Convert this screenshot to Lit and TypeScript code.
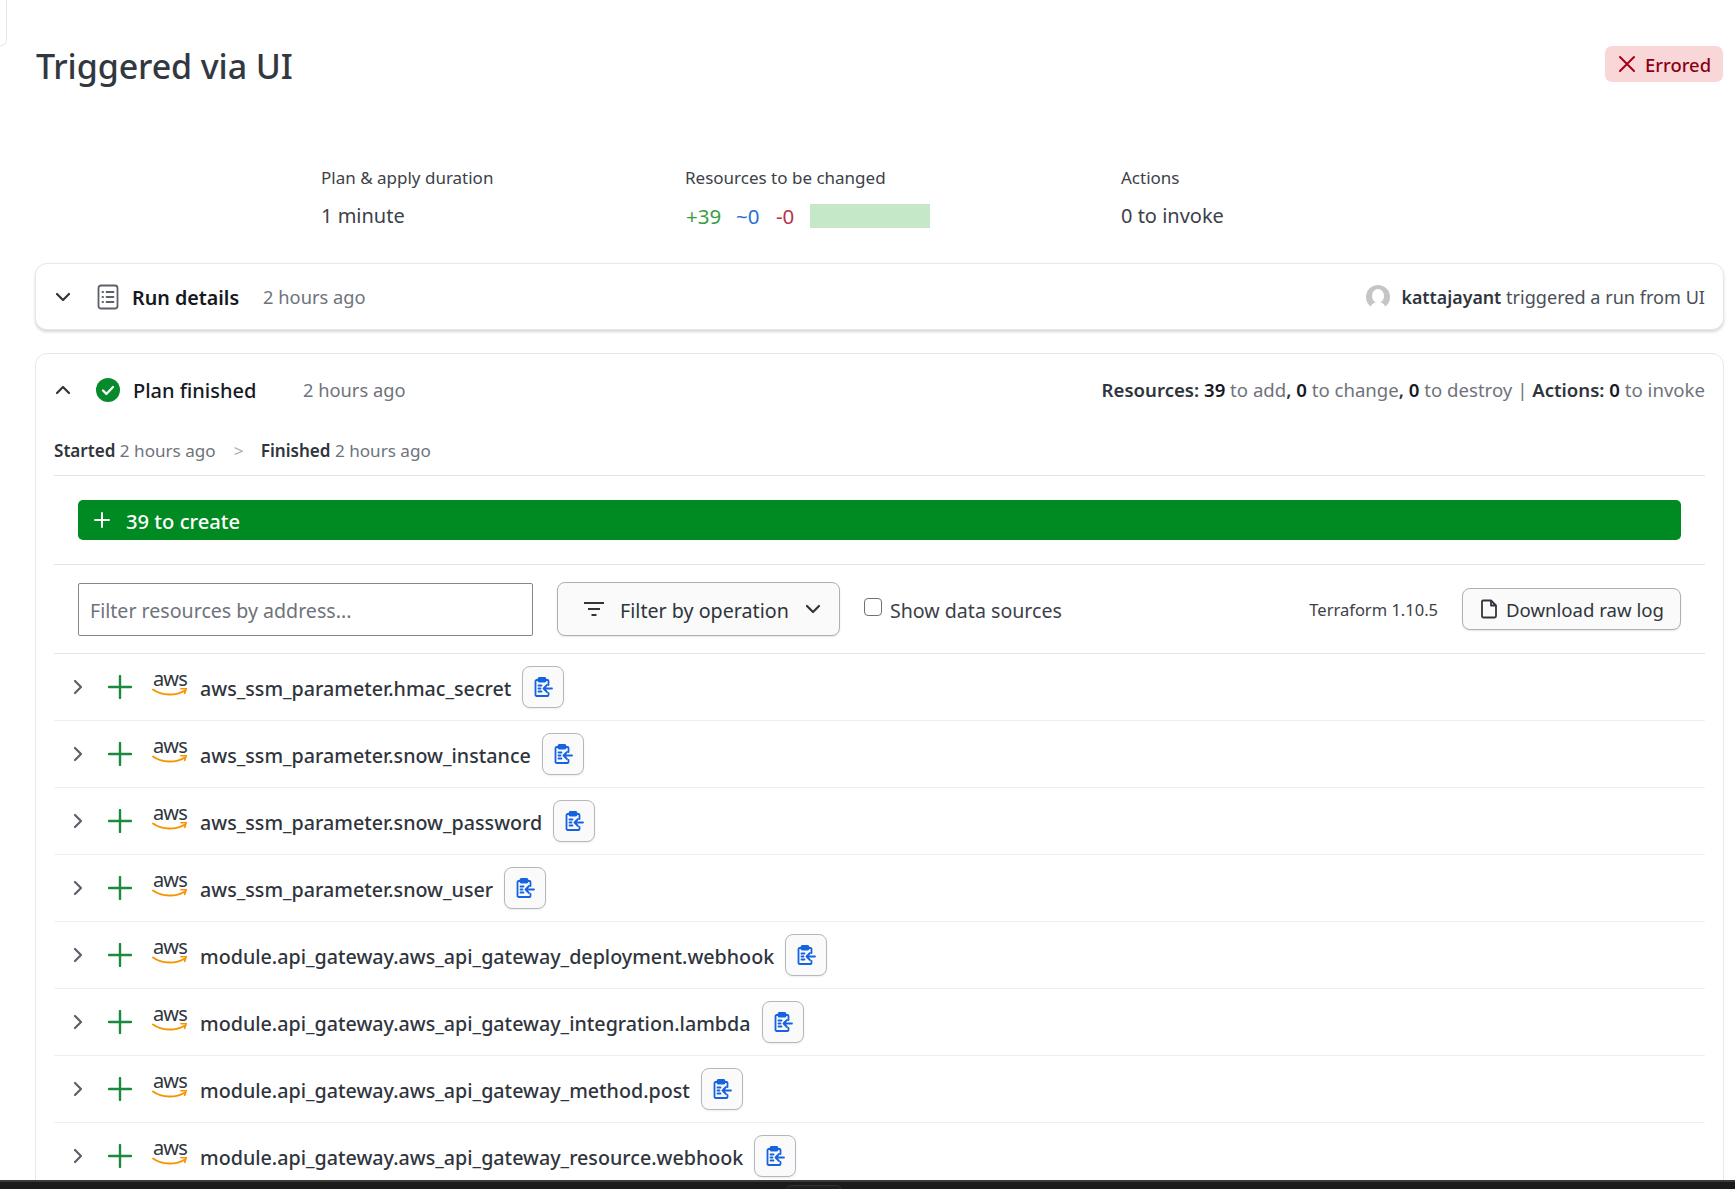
import { LitElement, html, css, svg } from "lit";
import { customElement } from "lit/decorators.js";

const chevron = (d: string, cls = "") => html`<svg class="chev ${cls}" viewBox="0 0 18 18" fill="none" stroke="currentColor" stroke-width="2.2" stroke-linecap="round" stroke-linejoin="round"><path d=${d}/></svg>`;

const clipIcon = svg`<svg class="clip" viewBox="0 0 20 20" fill="none" stroke="#1563e0" stroke-width="1.8" stroke-linejoin="round" stroke-linecap="round"><path d="M5.5 3H3.6A1.1 1.1 0 0 0 2.5 4.1v13.8A1.1 1.1 0 0 0 3.6 19h10.8a1.1 1.1 0 0 0 1.1-1.1V16"/><path d="M12.5 3h1.9a1.1 1.1 0 0 1 1.1 1.1V8"/><rect x="5.5" y="1" width="7" height="3.6" rx=".8" fill="#1563e0"/><path d="M5.5 8.5h3M5.5 11.5h2M5.5 14.5h3"/><path d="M19 11.5h-8M14 8l-3.500 3.500L14 15"/></svg>`;

const awsIcon = html`<div class="aws"><span>aws</span><svg viewBox="0 0 36 10" fill="none"><path d="M1 1.500c9 6.500 23 6.500 31.500 1.200" stroke="#f79400" stroke-width="1.900" stroke-linecap="round"/><path d="M29 .7l5.300-.4-1.600 5" stroke="#f79400" stroke-width="1.700" stroke-linecap="round" stroke-linejoin="round"/></svg></div>`;

const ROWS = [
  "aws_ssm_parameter.hmac_secret",
  "aws_ssm_parameter.snow_instance",
  "aws_ssm_parameter.snow_password",
  "aws_ssm_parameter.snow_user",
  "module.api_gateway.aws_api_gateway_deployment.webhook",
  "module.api_gateway.aws_api_gateway_integration.lambda",
  "module.api_gateway.aws_api_gateway_method.post",
  "module.api_gateway.aws_api_gateway_resource.webhook",
];

@customElement("app-root")
export class AppRoot extends LitElement {
  static styles = css`
    :host { display: flex; flex-direction: column; position: relative; height: 1189px; overflow: hidden; background: #fff; color: #30353d; font-family: "Noto Sans", sans-serif; }
    * { box-sizing: border-box; }
    .corner { position: absolute; left: -8px; top: -8px; width: 15px; height: 54px; border: 1px solid #e6e6e6; border-radius: 6px; }
    main { flex: 1; min-height: 0; overflow: hidden; padding: 46px 11px 0 35px; }
    .head { display: flex; justify-content: space-between; align-items: flex-start; height: 40px; }
    h1 { margin: 0 0 0 1px; font-size: 34px; line-height: 40px; font-weight: 500; color: #323840; letter-spacing: -.1px; }
    .badge { display: flex; align-items: center; gap: 9px; height: 36px; width: 118px; margin-right: 1px; padding-left: 13px; border-radius: 7px; background: #f9d7d9; color: #8a0013; font-size: 18.400px; font-weight: 500; }
    .badge svg { width: 18px; height: 18px; }
    .badge span { margin-top: 1px; }
    .stats { display: grid; grid-template-columns: 364px 436px auto; padding: 80px 0 0 286px; margin-bottom: 32px; }
    .label { font-size: 17px; line-height: 24px; color: #3c4149; }
    .value { margin-top: 11px; font-size: 20px; line-height: 30px; color: #3c4149; }
    .counts { display: flex; align-items: center; height: 30px; margin-top: 11px; font-size: 20.500px; }
    .g { color: #3a9b45; width: 51px; padding-left: 1px; }
    .b { color: #2a6fd6; width: 40px; }
    .r { color: #b7344a; width: 34px; }
    .bar { width: 120px; height: 24px; background: #c5e9c8; }
    .card { border: 1.5px solid #e8e8e8; border-radius: 12px; background: #fff; }
    .run { display: flex; align-items: center; height: 67px; margin-bottom: 23px; padding: 0 18px 0 18px; box-shadow: 0 2px 3px rgba(0,0,0,.16); }
    .chev { width: 18px; height: 18px; color: #30353d; flex: none; }
    .doc { width: 22px; height: 26px; margin-left: 25px; flex: none; }
    .t { font-size: 19.700px; font-weight: 600; color: #15191e; margin-top: 1px; }
    .run .t { margin-left: 13px; }
    .ago { font-size: 18.300px; color: #6e737b; }
    .run .ago { margin-left: 24px; }
    .end { margin-left: auto; display: flex; align-items: center; font-size: 18.100px; color: #4a4f57; }
    .avatar { width: 24px; height: 24px; margin-right: 12px; }
    .end b { font-weight: 600; color: #30353d; font-size: 17.800px; }
    .plan { height: 1000px; padding: 0 18px; }
    .phead { display: flex; align-items: center; height: 71px; }
    .check { width: 24px; height: 24px; margin-left: 24px; flex: none; }
    .phead .t { margin-left: 13px; width: 170px; font-size: 20px; font-weight: 500; }
    .sum { font-size: 18.600px; color: #6e737b; margin-left: auto; }
    .sum b { font-weight: 600; color: #30353d; }
    .sum b.n { color: #15191e; }
    .times { display: flex; align-items: center; height: 51px; border-bottom: 1.5px solid #e4e4e4; font-size: 17.100px; color: #6e737b; }
    .times b { font-weight: 600; color: #30353d; }
    .sep { width: 45px; padding-left: 18px; color: #a9adb3; }
    .sect { padding: 24px; border-bottom: 1.5px solid #e4e4e4; height: 89px; }
    .create { display: flex; align-items: center; height: 40px; padding-left: 15px; border-radius: 5px; background: #008a22; color: #fff; font-size: 20.200px; font-weight: 500; }
    .create svg { width: 18px; height: 18px; margin-right: 15px; }
    .create span { margin-top: 1px; }
    .tools { display: flex; align-items: center; height: 89px; padding: 0 24px; border-bottom: 1.5px solid #e4e4e4; }
    .input { display: flex; align-items: center; width: 455px; height: 53px; padding: 2px 0 0 11px; border: 1px solid #82868d; border-radius: 2px; font-size: 19.600px; color: #6e737b; }
    .filter { display: flex; align-items: center; width: 283px; height: 54px; margin-left: 24px; padding: 2px 0 0 24px; border: 1px solid #adb0b5; border-radius: 8px; background: #fafafa; font-size: 19.700px; box-shadow: 0 1px 2px rgba(0,0,0,.1); }
    .filter .fi { width: 24px; height: 18px; margin: -2px 14px 0 0; }
    .filter .chev { margin: -2px 17px 0 auto; }
    .cb { width: 18px; height: 18px; margin: -4px 8px 0 24px; border: 1.5px solid #6e737b; border-radius: 4px; background: #fff; }
    .cbl { font-size: 19.600px; color: #3c4149; margin-top: 2px; }
    .ver { margin-left: auto; font-size: 16.500px; color: #3c4149; }
    .dl { display: flex; align-items: center; width: 219px; height: 42px; margin-left: 24px; padding-left: 17px; border: 1px solid #adb0b5; border-radius: 8px; background: #fafafa; font-size: 18.600px; box-shadow: 0 1px 2px rgba(0,0,0,.1); white-space: nowrap; }
    .dl svg { width: 18px; height: 20px; margin-right: 8px; }
    .row { display: flex; align-items: center; height: 67px; padding-left: 15px; border-bottom: 1.5px solid #efefef; }
    .row .chev { color: #5c6068; margin-right: 21px; }
    .plus { width: 24px; height: 24px; margin-right: 20px; flex: none; }
    .aws { display: flex; flex-direction: column; width: 36px; margin-right: 12px; flex: none; margin-top: -6px; }
    .aws span { font-size: 20px; line-height: 15px; letter-spacing: -.9px; color: #2f3640; padding-left: 1px; }
    .aws svg { width: 36px; height: 10px; display: block; margin-top: 2px; }
    .name { font-size: 19.700px; font-weight: 500; color: #30353d; margin-top: 2px; }
    .copy { display: flex; align-items: center; justify-content: center; width: 42px; height: 42px; margin-left: 11px; border: 1px solid #b4b7bb; border-radius: 8px; background: #fafafa; box-shadow: 0 1px 2px rgba(0,0,0,.08); }
    .clip { width: 20px; height: 20px; }
    footer { height: 9px; flex: none; background: #1b1b1b; border-top: 2px solid #3a3a3a; }
    .tab { position: absolute; left: 786px; top: 1185px; width: 56px; height: 10px; border: 1px solid #333; border-radius: 6px 6px 0 0; background: #1f1f1f; }
  `;

  render() {
    return html`
      <div class="corner"></div>
      <main>
        <div class="head">
          <h1>Triggered via UI</h1>
          <div class="badge">
            <svg viewBox="0 0 18 18" fill="none" stroke="#a3001a" stroke-width="2" stroke-linecap="round"><path d="M2 2l14 14M16 2L2 16"/></svg>
            <span>Errored</span>
          </div>
        </div>
        <div class="stats">
          <div><div class="label">Plan &amp; apply duration</div><div class="value">1 minute</div></div>
          <div>
            <div class="label">Resources to be changed</div>
            <div class="counts"><span class="g">+39</span><span class="b">~0</span><span class="r">-0</span><span class="bar"></span></div>
          </div>
          <div><div class="label">Actions</div><div class="value">0 to invoke</div></div>
        </div>
        <section class="card run">
          ${chevron("M3 6l6 6 6-6")}
          <svg class="doc" viewBox="0 0 22 26" fill="none" stroke="#5c6068" stroke-width="1.800" stroke-linecap="round"><rect x="1.500" y="1.500" width="19" height="23" rx="2.500"/><path d="M9.500 8h7M9.500 13h7M9.500 18h7M5.500 8h.6M5.500 13h.6M5.500 18h.6"/></svg>
          <span class="t">Run details</span>
          <span class="ago">2 hours ago</span>
          <div class="end">
            <svg class="avatar" viewBox="0 0 24 24"><circle cx="12" cy="12" r="12" fill="#c4c5c7"/><ellipse cx="12" cy="11" rx="6" ry="7" fill="#fff"/><path d="M4 24c1-5 4-7 8-7s7 2 8 7z" fill="#fff"/></svg>
            <b>kattajayant</b>&nbsp;triggered a run from UI
          </div>
        </section>
        <section class="card plan">
          <div class="phead">
            ${chevron("M3 12l6-6 6 6")}
            <svg class="check" viewBox="0 0 24 24"><circle cx="12" cy="12" r="12" fill="#078a2b"/><path d="M7 12.500l3.400 3.400L17 9" fill="none" stroke="#fff" stroke-width="2.200" stroke-linecap="round" stroke-linejoin="round"/></svg>
            <span class="t">Plan finished</span>
            <span class="ago">2 hours ago</span>
            <div class="sum"><b>Resources: </b><b class="n">39</b> to add<b>, </b><b class="n">0</b> to change<b>, </b><b class="n">0</b> to destroy | <b>Actions: </b><b class="n">0</b> to invoke</div>
          </div>
          <div class="times"><b>Started</b>&nbsp;2 hours ago<span class="sep">&gt;</span><b>Finished</b>&nbsp;2 hours ago</div>
          <div class="sect">
            <div class="create">
              <svg viewBox="0 0 18 18" fill="none" stroke="#fff" stroke-width="2" stroke-linecap="round"><path d="M9 2v14M2 9h14"/></svg>
              <span>39 to create</span>
            </div>
          </div>
          <div class="tools">
            <div class="input">Filter resources by address...</div>
            <div class="filter">
              <svg class="fi" viewBox="0 0 24 18" fill="none" stroke="#30353d" stroke-width="2"><path d="M2 3h20M6 9h12M9.500 15h5"/></svg>
              <span>Filter by operation</span>
              ${chevron("M3 6l6 6 6-6")}
            </div>
            <div class="cb"></div>
            <span class="cbl">Show data sources</span>
            <span class="ver">Terraform 1.10.5</span>
            <div class="dl">
              <svg viewBox="0 0 18 20" fill="none" stroke="#30353d" stroke-width="1.800" stroke-linejoin="round"><path d="M3 1.500h8l5 5V17a1.500 1.500 0 0 1-1.500 1.500h-11A1.500 1.500 0 0 1 2 17V2.500A1 1 0 0 1 3 1.500zM11 1.500v5h5"/></svg>
              <span>Download raw log</span>
            </div>
          </div>
          ${ROWS.map(
            (r) => html`<div class="row">
              ${chevron("M6 3l6 6-6 6")}
              <svg class="plus" viewBox="0 0 24 24" stroke="#1b8a3e" stroke-width="2.400" stroke-linecap="round"><path d="M12 1v22M1 12h22"/></svg>
              ${awsIcon}
              <span class="name">${r}</span>
              <div class="copy">${clipIcon}</div>
            </div>`
          )}
        </section>
      </main>
      <footer></footer>
      <div class="tab"></div>
    `;
  }
}
